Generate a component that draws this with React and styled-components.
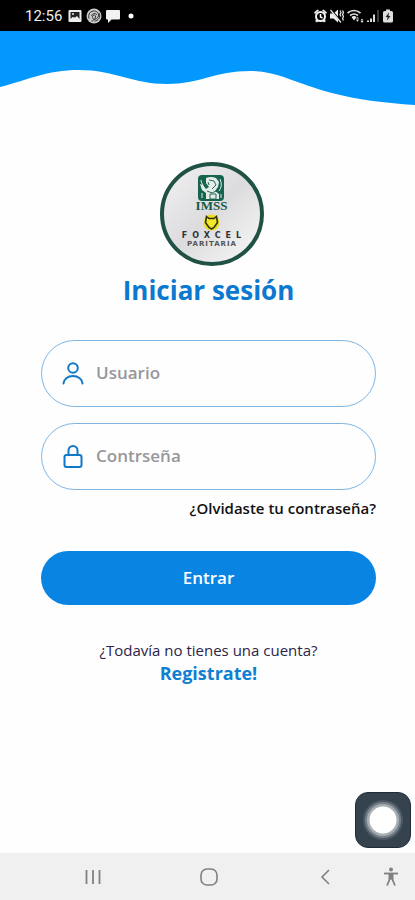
import React from "react";
import styled, { createGlobalStyle } from "styled-components";

const GlobalStyle = createGlobalStyle`
  *, *::before, *::after { box-sizing: border-box; }
  body {
    margin: 0;
    background: #fefefe;
    font-family: "Open Sans", "Noto Sans", sans-serif;
  }
  svg { display: block; }
`;

const Screen = styled.div`
  min-height: 100vh;
  display: flex;
  flex-direction: column;
`;

const StatusBar = styled.header`
  height: 31px;
  padding: 1px 22px 0 25px;
  display: flex;
  align-items: center;
  justify-content: space-between;
  background: #000;
  color: #eee;
`;

const StatusGroup = styled.div`
  display: flex;
  align-items: center;
  gap: ${(p) => p.$gap}px;
`;

const Clock = styled.time`
  font: 400 15px/18px Roboto, sans-serif;
  margin-right: 2px;
`;

const Wave = styled.svg`
  width: 100%;
  height: 75px;
`;

const Main = styled.main`
  flex: 1;
  padding: 56px 39px 0 41px;
  display: flex;
  flex-direction: column;
  align-items: center;
`;

const Title = styled.h1`
  margin: 6px 0 32px;
  font-size: 26px;
  line-height: 36px;
  font-weight: 700;
  color: #0b79cf;
`;

const Form = styled.form`
  width: 100%;
  display: flex;
  flex-direction: column;
  gap: 16px;
`;

const Field = styled.label`
  height: 67px;
  padding: 0 20px;
  display: flex;
  align-items: center;
  gap: 12px;
  border: 1px solid #7db6e6;
  border-radius: 34px;
  color: #0f78c8;
`;

const Input = styled.input`
  flex: 1;
  min-width: 0;
  padding: 0 0 2px;
  border: 0;
  outline: 0;
  background: transparent;
  color: #333;
  font: 600 17px/24px "Open Sans", sans-serif;
  &::placeholder { color: #97979a; opacity: 1; }
`;

const ForgotLink = styled.a`
  align-self: flex-end;
  margin-top: -8px;
  font-size: 15px;
  line-height: 20px;
  font-weight: 600;
  color: #111;
  text-decoration: none;
`;

const SubmitButton = styled.button`
  height: 54px;
  margin-top: 17px;
  border: 0;
  border-radius: 27px;
  background: #0984e3;
  color: #fff;
  font: 600 17px/24px "Open Sans", sans-serif;
  cursor: pointer;
`;

const SignUp = styled.p`
  margin: 34px 0 0;
  display: flex;
  flex-direction: column;
  align-items: center;
  font-size: 15px;
  line-height: 22px;
  color: #2c2348;
`;

const SignUpLink = styled.a`
  font-size: 18px;
  line-height: 24px;
  font-weight: 700;
  color: #0f7fd2;
  text-decoration: none;
`;

const AssistButton = styled.button`
  position: fixed;
  right: 4px;
  bottom: 52px;
  width: 56px;
  height: 56px;
  padding: 0;
  border: 1px solid #202b35;
  border-radius: 13px;
  background: #35434f;
  display: grid;
  place-items: center;
`;

const NavBar = styled.nav`
  height: 47px;
  padding: 0 16px 0 35px;
  display: grid;
  grid-template-columns: 1fr 1fr 1fr 16px;
  align-items: center;
  background: #f0f0f0;
`;

const NavButton = styled.button`
  height: 47px;
  padding: 0;
  border: 0;
  background: none;
  color: #808080;
  display: grid;
  place-items: center;
`;

function PictureIcon() {
  return (
    <svg width="14" height="14" viewBox="0 0 14 14" aria-hidden="true">
      <rect x="0.5" y="1" width="13" height="12" rx="1" fill="#eee" />
      <path d="M2.5 3h9v7l-2.5-3-2 1.5L4.500 8l-2 2z" fill="#222" />
      <circle cx="5" cy="5" r="1" fill="#eee" />
    </svg>
  );
}

function SwirlIcon() {
  return (
    <svg width="16" height="16" viewBox="0 0 16 16" fill="none" stroke="#333" aria-hidden="true">
      <circle cx="8" cy="8" r="7.500" fill="#c9c9c9" stroke="none" />
      <path d="M3 10.500C1.500 6 5 2.500 8.500 3s5 3.500 3.500 6-5 3.500-5.500.5 3.500-3.500 3-.5-3.500 4.500-4 4M5.500 8c.5-2.500 4-3.500 5.500-1M13 5c2 4-1 8-4.500 8" />
    </svg>
  );
}

function MessageIcon() {
  return (
    <svg width="14" height="14" viewBox="0 0 14 14" aria-hidden="true">
      <path d="M1 1h12q1 0 1 1v7.500q0 1-1 1H5.500L2 14v-3.500H1q-1 0-1-1V2q0-1 1-1z" fill="#f2f2f2" />
    </svg>
  );
}

function DotIcon() {
  return (
    <svg width="6" height="6" viewBox="0 0 6 6" aria-hidden="true">
      <circle cx="3" cy="3" r="2.500" fill="#fff" />
    </svg>
  );
}

function AlarmIcon() {
  return (
    <svg width="13" height="14" viewBox="0 0 13 14" aria-hidden="true">
      <path d="M0 3.500 3.500.5l1.500 1L1 5zM13 3.500 9.500.5l-1.500 1L12 5zM1 12l2-2 1.500 2L3 13.500zM12 12l-2-2-1.500 2 1.500 1.500z" fill="#eee" />
      <circle cx="6.500" cy="7.500" r="4.500" fill="#000" stroke="#f2f2f2" strokeWidth="2" />
      <path d="M6.500 5v3l2 1" fill="none" stroke="#fff" strokeWidth="1.500" />
    </svg>
  );
}

function MutedIcon() {
  return (
    <svg width="14" height="14" viewBox="0 0 14 14" aria-hidden="true">
      <path d="M0 4.500h3.500L8 .5v13L3.500 9.500H0z" fill="#eee" />
      <path d="m1.500 1 10 12" stroke="#000" strokeWidth="1.500" />
      <path d="M.5 1 11 13.500M10 1.500l1 2-1 2 1 2M12.500 1.500l1 2-1 2 1 2-1 2 1 2" stroke="#ddd" strokeWidth="1.300" fill="none" />
    </svg>
  );
}

function WifiIcon() {
  return (
    <svg width="17" height="14" viewBox="0 0 17 14" fill="none" stroke="#ddd" strokeWidth="1.700" aria-hidden="true">
      <path d="M.5 4q6.500-5 13 0M3 6.500q4-3 8 0" />
      <path d="M4.500 8q2.500-2 5 0L7 11.500z" fill="#eee" stroke="none" />
      <path d="M9 9.500h3L10.500 8zM9 10.500h3l-1.500 2.500zM13.500 11.500h3L15 9.500zM13.500 12h3L15 14z" fill="#ddd" stroke="none" />
    </svg>
  );
}

function SignalIcon() {
  return (
    <svg width="13" height="14" viewBox="0 0 13 14" aria-hidden="true">
      <path d="M0 11.500h2V13H0zM3 9.500h2V13H3zM6 5.500h2V13H6z" fill="#ddd" />
      <path d="M11 1v12" stroke="#777" />
    </svg>
  );
}

function BatteryIcon() {
  return (
    <svg width="10" height="14" viewBox="0 0 10 14" aria-hidden="true">
      <path d="M3 .5h4V2h1.500q1.500 0 1.500 1.500V12q0 1.500-1.500 1.500h-7Q0 13.500 0 12V3.500Q0 2 1.500 2H3z" fill="#ddd" />
      <path d="M6 3.500 2.500 8h2L4 11.500 7.500 7h-2z" fill="#222" />
    </svg>
  );
}

function UserIcon() {
  return (
    <svg width="22" height="24" viewBox="0 0 22 24" fill="none" stroke="currentColor" strokeWidth="2" strokeLinecap="round" aria-hidden="true">
      <circle cx="11" cy="6" r="4.800" />
      <path d="M1.500 21.500c.5-4.500 4.500-7.500 9.500-7.500s9 3 9.500 7.500" />
    </svg>
  );
}

function LockIcon() {
  return (
    <svg width="22" height="24" viewBox="0 0 22 24" fill="none" stroke="currentColor" strokeWidth="2" strokeLinejoin="round" aria-hidden="true">
      <rect x="2.500" y="10" width="17" height="12" rx="2" />
      <path d="M6.500 10V5.500a4.500 4.500 0 0 1 9 0V10" />
    </svg>
  );
}

function Logo() {
  return (
    <svg width="110" height="104" viewBox="-6 0 110 104" role="img" aria-label="IMSS Foxcel Paritaria">
      <defs>
        <linearGradient id="disc" x1="0" y1="0" x2="1" y2="1">
          <stop offset="0" stopColor="#f2f2f3" />
          <stop offset="0.500" stopColor="#dcdcde" />
          <stop offset="1" stopColor="#fafafa" />
        </linearGradient>
      </defs>
      <circle cx="52" cy="52" r="50" fill="url(#disc)" stroke="#1f5145" strokeWidth="4" />
      <rect x="38" y="13" width="26" height="26" rx="4" fill="#166350" />
      <path d="M46 16q5-2 10 0l3 4-1 5-3 4 4 3v5H46v-6l-4-3-2-6 3 1 3 4 3-2-3-4z" fill="#e4ece8" />
      <path d="m49 18 5 1 2 4-4 4M47 29l5 2 4-2M50 32h6v5h-6zM48 20l1 3" fill="none" stroke="#276a58" />
      <path d="M60 17q3 7-1 12M41 18q0 3 2 5M42 31v5M61 32v4" fill="none" stroke="#e4ece8" />
      <text x="51.500" y="48" textAnchor="middle" fontFamily="Liberation Serif, serif" fontWeight="700" fontSize="13" fill="#185844">IMSS</text>
      <circle cx="51.500" cy="60.500" r="8" fill="#e9df20" />
      <path d="m46.500 54.500 2.500 2h5l2.500-2 1 6-3.500 5-2.500 1.500-2.500-1.500-3.500-5z" fill="#f2e82c" stroke="#34320e" strokeWidth="1.600" />
      <text x="54" y="76" textAnchor="middle" fontFamily="DejaVu Sans, sans-serif" fontWeight="700" fontSize="8" letterSpacing="5" fill="#333">FOXCEL</text>
      <text x="52" y="84" textAnchor="middle" fontFamily="DejaVu Sans, sans-serif" fontWeight="700" fontSize="7" letterSpacing="1" fill="#555">PARITARIA</text>
    </svg>
  );
}

function AssistIcon() {
  return (
    <svg width="44" height="44" viewBox="0 0 44 44" aria-hidden="true">
      <circle cx="22" cy="22" r="20" fill="#4d5a64" />
      <circle cx="22" cy="22" r="18" fill="#75808a" />
      <circle cx="22" cy="22" r="16" fill="#a8afb4" />
      <circle cx="22" cy="22" r="13.500" fill="#fff" />
    </svg>
  );
}

function RecentsIcon() {
  return (
    <svg width="16" height="16" viewBox="0 0 16 16" fill="none" stroke="currentColor" strokeWidth="1.800" aria-hidden="true">
      <path d="M1.500 1v14M8 1v14M14.500 1v14" />
    </svg>
  );
}

function HomeIcon() {
  return (
    <svg width="18" height="18" viewBox="0 0 18 18" fill="none" stroke="currentColor" strokeWidth="1.600" aria-hidden="true">
      <rect x="1" y="1" width="16" height="16" rx="6" />
    </svg>
  );
}

function BackIcon() {
  return (
    <svg width="10" height="16" viewBox="0 0 10 16" fill="none" stroke="currentColor" strokeWidth="1.600" aria-hidden="true">
      <path d="M9 1 2 8l7 7" />
    </svg>
  );
}

function AccessibilityIcon() {
  return (
    <svg width="16" height="20" viewBox="0 0 16 20" fill="none" stroke="currentColor" aria-hidden="true">
      <circle cx="8" cy="2.500" r="2" fill="currentColor" stroke="none" />
      <path d="M1 6.500h14" strokeWidth="1.800" />
      <path d="M5.500 6h5v6.500h-5z" fill="currentColor" stroke="none" />
      <path d="M7 11.500 4 18.500M9 11.500l3 7" strokeWidth="1.800" />
    </svg>
  );
}

export default function App() {
  return (
    <Screen>
      <GlobalStyle />
      <StatusBar>
        <StatusGroup $gap={4}>
          <Clock>12:56</Clock>
          <PictureIcon />
          <SwirlIcon />
          <MessageIcon />
          <StatusGroup $gap={0}>
            <svg width="4" height="6" aria-hidden="true" />
            <DotIcon />
          </StatusGroup>
        </StatusGroup>
        <StatusGroup $gap={3}>
          <AlarmIcon />
          <MutedIcon />
          <WifiIcon />
          <SignalIcon />
          <BatteryIcon />
        </StatusGroup>
      </StatusBar>
      <Wave viewBox="0 0 415 75" preserveAspectRatio="none" aria-hidden="true">
        <path
          d="M0 0H415V74C370 71 343 66 315 57C291 50 275 40 250 40C215 40 200 53 167 53C132 53 115 39 79 39C46 39 28 49 0 56Z"
          fill="#0398fe"
        />
      </Wave>
      <Main>
        <Logo />
        <Title>Iniciar sesión</Title>
        <Form onSubmit={(e) => e.preventDefault()}>
          <Field>
            <UserIcon />
            <Input type="text" name="user" placeholder="Usuario" aria-label="Usuario" />
          </Field>
          <Field>
            <LockIcon />
            <Input type="password" name="password" placeholder="Contrseña" aria-label="Contrseña" />
          </Field>
          <ForgotLink href="#recuperar">¿Olvidaste tu contraseña?</ForgotLink>
          <SubmitButton type="submit">Entrar</SubmitButton>
        </Form>
        <SignUp>
          ¿Todavía no tienes una cuenta?
          <SignUpLink href="#registro">Registrate!</SignUpLink>
        </SignUp>
      </Main>
      <AssistButton type="button" aria-label="Menú flotante">
        <AssistIcon />
      </AssistButton>
      <NavBar>
        <NavButton type="button" aria-label="Recientes"><RecentsIcon /></NavButton>
        <NavButton type="button" aria-label="Inicio"><HomeIcon /></NavButton>
        <NavButton type="button" aria-label="Atrás"><BackIcon /></NavButton>
        <NavButton type="button" aria-label="Accesibilidad"><AccessibilityIcon /></NavButton>
      </NavBar>
    </Screen>
  );
}
